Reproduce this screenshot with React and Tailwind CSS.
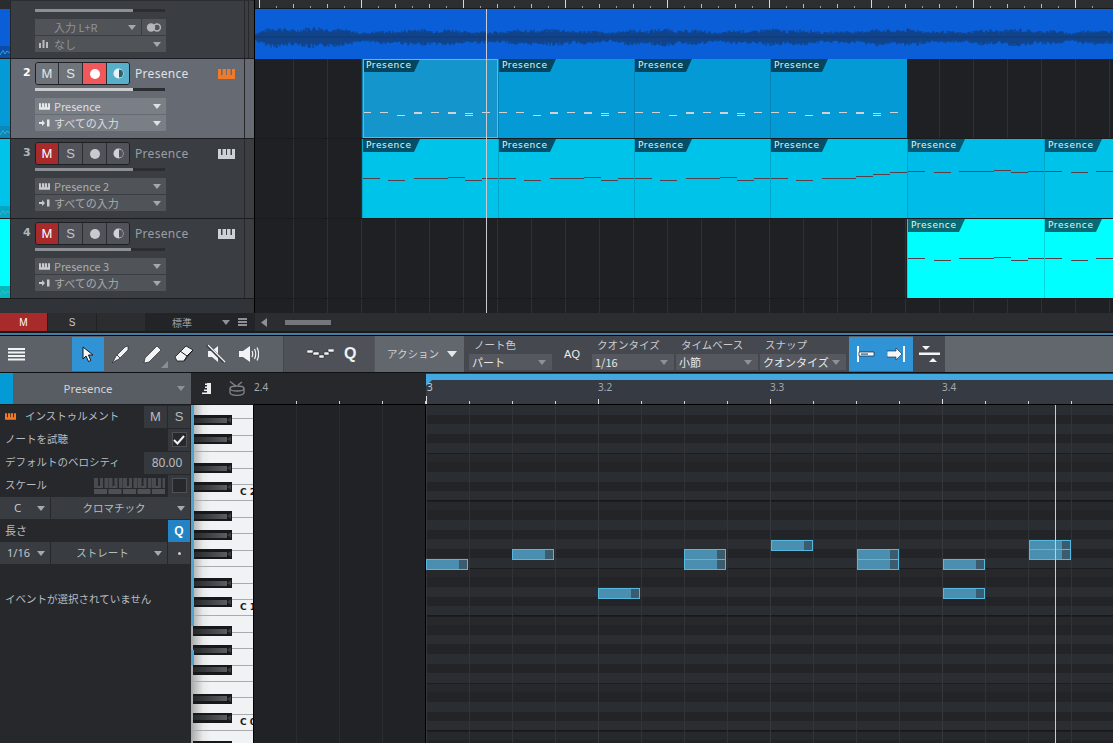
import React from "react";

const JP = "font-['Noto_Sans_CJK_JP','Noto_Sans',sans-serif]";

function PianoIcon({ w = 17, h = 10, color = "#f07a2a" }) {
  return (
    <svg width={w} height={h} viewBox="0 0 17 10" fill={color}>
      <path d="M0 0h3v6h1.5V0h3.5v6h1V0h3.5v6h1.500V0H17v10H0z" />
    </svg>
  );
}

function InputIcon({ color }) {
  return (
    <svg width="11" height="8" viewBox="0 0 11 8" fill={color}>
      <path d="M0 3h3V1l3 3-3 3V5H0zM8 0.500h2.500v7H8z" />
    </svg>
  );
}

function Tri({ color = "#a5a8ac", size = 8 }) {
  return (
    <svg width={size} height={size * 0.625} viewBox="0 0 8 5" fill={color} className="shrink-0">
      <path d="M0 0h8L4 5z" />
    </svg>
  );
}

function MiniWave() {
  return (
    <svg width="10" height="7" viewBox="0 0 10 7" fill="none" stroke="#4fb0cf" strokeWidth="0.8">
      <path d="M0 6 3 1.500 5 5 7 2l3 2" />
    </svg>
  );
}

function DropRow({ icon, text, selected, dim, narrow }) {
  const bg = selected ? "bg-[#7a7f86]" : "bg-[#505357]";
  const fg = selected ? "text-[#dcdee0]" : dim ? "text-[#8f9296]" : "text-[#a9acb0]";
  return (
    <div className={`${narrow ? "w-[106px]" : "w-[131px]"} h-[16px] flex items-center pl-[4px] pr-[5px] ${bg}`}>
      <span className="w-[15px] shrink-0 flex items-center">{icon}</span>
      <span className={`flex-1 text-[11px] leading-none whitespace-nowrap ${fg} ${JP}`}>{text}</span>
      <Tri color={selected ? "#dfe1e3" : "#a5a8ac"} />
    </div>
  );
}

function TrackBtn({ w, className = "", children, last }) {
  return (
    <div className={`h-full flex items-center justify-center ${last ? "" : "border-r border-[#2a2c30]"} ${className}`} style={{ width: w }}>
      {children}
    </div>
  );
}

function HalfCircle({ color, cut }) {
  return (
    <svg width="11" height="11" viewBox="0 0 11 11">
      <circle cx="5.500" cy="5.500" r="5" fill={color} />
      <path d="M6 1.500a4 4 0 0 1 0 8z" fill={cut} />
    </svg>
  );
}

function Track({ num, color, tag, selected, inst, fader = 98 }) {
  const base = selected ? "bg-[#666b73]" : "bg-[#3a3d42]";
  const btn = selected ? "bg-[#6f747b] text-[#e4e6e8]" : "bg-[#50545a] text-[#c4c6c9]";
  const pianoColor = selected ? "#f07a2a" : "#cfd2d5";
  const inColor = selected ? "#e6e8ea" : "#c8cacc";
  return (
    <div className={`h-[80px] flex border-b border-[#1d1e21] ${base}`}>
      <div className="w-[10px] flex flex-col justify-end shrink-0" style={{ background: color }}>
        <div className="h-[12px] flex items-center justify-center" style={{ background: tag }}>
          <MiniWave />
        </div>
      </div>
      <div className="w-px bg-[#24262a]" />
      <div className="w-[233px] shrink-0 pl-[24px] flex flex-col">
        <div className="flex items-center h-[27px] pt-[2px]">
          <div className={`-ml-[12px] w-[12px] text-[11px] font-bold ${selected ? "text-white" : "text-[#b3b6ba]"} font-['DejaVu_Sans',sans-serif]`}>{num}</div>
          <div className="ml-0 w-[95px] h-[23px] flex rounded-[3px] border border-[#1e2023] overflow-hidden text-[13px] font-['Liberation_Sans',sans-serif]">
            <TrackBtn w={23} className={selected ? btn : "bg-[#a82a2a] text-white"}>M</TrackBtn>
            <TrackBtn w={24} className={btn}>S</TrackBtn>
            <TrackBtn w={24} className={selected ? "bg-[#f0585c]" : btn}>
              <div className={`w-[10px] h-[10px] rounded-full ${selected ? "bg-white" : "bg-[#c8cacc]"}`} />
            </TrackBtn>
            <TrackBtn w={22} last className={selected ? "bg-[#58afc9]" : btn}>
              <HalfCircle color={selected ? "#e9f3f6" : "#d0d2d4"} cut={selected ? "#2b5f72" : "#50545a"} />
            </TrackBtn>
          </div>
          <span className={`ml-[5px] w-[83px] text-[12px] font-['Noto_Sans',sans-serif] tracking-[0.3px] ${selected ? "text-[#dfe1e3]" : "text-[#9b9ea2]"}`}>Presence</span>
          <PianoIcon color={pianoColor} />
        </div>
        <div className="h-[3px] w-[130px] mt-[2px] bg-[#2b2d31]">
          <div className={`h-full ${selected ? "bg-[#c9cbce]" : "bg-[#8c8f93]"}`} style={{ width: fader }} />
        </div>
        <div className="mt-[7px] flex flex-col gap-px">
          <DropRow icon={<PianoIcon w={11} h={7} color={inColor} />} text={inst} selected={selected} />
          <DropRow icon={<InputIcon color={inColor} />} text="すべての入力" selected={selected} />
        </div>
      </div>
      <div className="w-px bg-[#26282c]" />
      <div className="flex-1" />
    </div>
  );
}

function Track1() {
  return (
    <div className="h-[59px] flex bg-[#3a3d42] border-b border-[#1d1e21] border-t-[1px] border-t-[#2b2d31]">
      <div className="w-[10px] flex flex-col justify-between bg-[#0a5fd8] shrink-0">
        <div className="h-[8px] bg-[#2a2c30]" />
        <div className="h-[12px] flex items-center justify-center bg-[#0a4ea8]"><MiniWave /></div>
      </div>
      <div className="w-px bg-[#24262a]" />
      <div className="w-[233px] pl-[24px] flex flex-col">
        <div className="h-[3px] w-[130px] mt-[8px] bg-[#2b2d31]"><div className="h-full w-[98px] bg-[#8c8f93]" /></div>
        <div className="mt-[7px] flex flex-col gap-px">
          <div className="flex gap-px">
            <DropRow text="入力 L+R" dim narrow icon={<span className={`text-[11px] leading-none text-[#8f9296] ${JP}`} />} />
            <div className="w-[24px] h-[16px] bg-[#505357] flex items-center justify-center">
              <svg width="16" height="9" viewBox="0 0 16 9"><circle cx="5" cy="4.500" r="4.200" fill="#b4b6b9" /><circle cx="11" cy="4.500" r="3.400" fill="none" stroke="#b4b6b9" strokeWidth="1.500" /></svg>
            </div>
          </div>
          <DropRow text="なし" dim icon={
            <svg width="9" height="8" viewBox="0 0 9 8" fill="#b8babd"><path d="M0 3h2v5H0zM3.500 0h2v8h-2zM7 2h2v6H7z" /></svg>
          } />
        </div>
      </div>
      <div className="w-px bg-[#26282c]" />
      <div className="w-[3px]" />
      <div className="w-px bg-[#26282c]" />
    </div>
  );
}

function Waveform() {
  const pts = [];
  let seed = 7;
  const rnd = () => { seed = (seed * 9301 + 49297) % 233280; return seed / 233280; };
  for (let x = 0; x < 858; x++) {
    const env = 3.2 + 2.4 * Math.abs(Math.sin(x / 37)) + 1.8 * Math.abs(Math.sin(x / 11.3)) + (x < 90 ? 2.4 * Math.abs(Math.sin(x / 14)) : 0);
    const up = env * (0.6 + rnd() * 0.6);
    const dn = env * (0.7 + rnd() * 0.6);
    pts.push(`M${x} ${(28 - up).toFixed(1)}V${(28 + dn).toFixed(1)}`);
  }
  return (
    <svg width="858" height="50" viewBox="0 0 858 50" className="block">
      <path d={pts.join("")} stroke="#123a6e" strokeWidth="1" fill="none" />
      <path d="M0 28H858" stroke="#123a6e" strokeWidth="1" />
    </svg>
  );
}

const P3 = [[0, 17, 39], [25, 42, 41], [51, 85, 39], [85, 102, 38], [102, 119, 41], [119, 136, 39]];
const P3b = [[0, 17, 39], [25, 42, 41], [51, 85, 39], [85, 102, 37], [102, 119, 35], [119, 136, 33]];
const P5 = [[0, 17, 32], [26, 43, 33], [51, 86, 32], [86, 103, 31], [103, 120, 33], [120, 137, 32]];
const P4 = [[0, 17, 39], [26, 43, 41], [51, 86, 39], [86, 103, 38], [103, 120, 41], [120, 137, 39]];
const P2 = [[0, 8, 53, 1], [17, 25, 53, 1], [34, 42, 56, 1], [51, 59, 53, 2], [68, 76, 53, 1], [85, 93, 53, 2], [102, 110, 54, 1], [102, 110, 56, 1], [119, 127, 53, 1]];

function Clip({ width = 136, bg, tagBg, notes, noteColor, selected }) {
  return (
    <div className="relative h-full shrink-0 border-l border-black/15" style={{ width, background: bg }}>
      <svg width={width} height="79" viewBox={`0 0 ${width} 79`} className="absolute inset-0">
        {notes.map(([a, b, y, t = 1], i) => (
          <rect key={i} x={a} y={y} width={b - a} height={t} fill={noteColor} />
        ))}
      </svg>
      <div
        className="absolute left-0 top-0 h-[13px] w-[57px] pl-[3px] text-[9px] leading-[13px] text-[#e6f4f8] tracking-[0.6px] font-['DejaVu_Sans',sans-serif] [clip-path:polygon(0_0,100%_0,calc(100%-6px)_100%,0_100%)]"
        style={{ background: tagBg }}
      >
        Presence
      </div>
      {selected && <div className="absolute inset-0 border border-[#9aa4aa]" />}
    </div>
  );
}

function Lane({ left, children }) {
  return (
    <div className="h-[80px] border-b border-[#1a1b1d] flex overflow-hidden" style={{ paddingLeft: left }}>
      {children}
    </div>
  );
}

function TopRuler() {
  const ticks = [];
  for (let i = 0; i < 50; i++) {
    const x = 4 + i * 17;
    const big = (i % 2) === 0;
    ticks.push(<div key={i} className={`absolute bottom-0 w-px ${(i % 6) === 0 ? "h-[8px] bg-[#d8d8d8]" : big ? "h-[4px] bg-[#bbb]" : "h-[2px] bg-[#999]"}`} style={{ left: x }} />);
  }
  return <div className="h-[9px] relative bg-[#2c2e32] border-b border-[#18191b]">{ticks}</div>;
}

function Arrangement() {
  const c2 = "#049ad6", c3 = "#00c3ea", c4 = "#00ffff";
  return (
    <div className="flex-1 relative flex flex-col overflow-hidden bg-[#1f2023] bg-[repeating-linear-gradient(90deg,transparent_0,transparent_33px,#2e3034_33px,#2e3034_34px)] bg-[position:5px_0]">
      <TopRuler />
      <div className="h-[50px] bg-[#0a5fd8] overflow-hidden"><Waveform /></div>
      <Lane left={107}>
        <Clip bg="#1496cc" tagBg="#04465f" notes={P2} noteColor="#cfd3d6" selected />
        <Clip bg={c2} tagBg="#04465f" notes={P2} noteColor="#cfd3d6" />
        <Clip bg={c2} tagBg="#04465f" notes={P2} noteColor="#cfd3d6" />
        <Clip width={137} bg={c2} tagBg="#04465f" notes={P2} noteColor="#cfd3d6" />
      </Lane>
      <Lane left={107}>
        <Clip bg={c3} tagBg="#04506b" notes={P3} noteColor="#5a4048" />
        <Clip bg={c3} tagBg="#04506b" notes={P3} noteColor="#5a4048" />
        <Clip bg={c3} tagBg="#04506b" notes={P3} noteColor="#5a4048" />
        <Clip width={137} bg={c3} tagBg="#04506b" notes={P3b} noteColor="#5a4048" />
        <Clip width={137} bg="#00bce8" tagBg="#045a74" notes={P5} noteColor="#5a4048" />
        <Clip width={137} bg="#00c3ea" tagBg="#045a74" notes={P5} noteColor="#5a4048" />
      </Lane>
      <Lane left={652}>
        <Clip width={137} bg={c4} tagBg="#086b73" notes={P4} noteColor="#5a4048" />
        <Clip width={137} bg={c4} tagBg="#086b73" notes={P4} noteColor="#5a4048" />
      </Lane>
      <div className="flex-1" />
      <div className="absolute left-[231px] top-[9px] bottom-0 w-px bg-[#c8ccd0]" />
    </div>
  );
}

function BottomBar() {
  return (
    <div className="h-[18px] flex bg-[#2b2d31] text-[10px] text-[#c8cacc]">
      <div className={`w-[48px] flex items-center justify-center bg-[#a82a2a] text-white border-r border-[#222] font-['Liberation_Sans',sans-serif]`}>M</div>
      <div className="w-[49px] flex items-center justify-center border-r border-[#222] font-['Liberation_Sans',sans-serif]">S</div>
      <div className="w-[48px]" />
      <div className="w-[110px] flex items-center bg-[#222428] relative">
        <span className={`ml-[27px] text-[#a0a3a7] text-[10px] ${JP}`}>標準</span>
        <span className="ml-[30px]"><Tri color="#8d9094" /></span>
        <svg width="9" height="8" viewBox="0 0 9 8" fill="#8d9094" className="ml-[8px]"><path d="M0 0h9v2H0zM0 3h9v2H0zM0 6h9v2H0z" /></svg>
      </div>
      <div className="flex-1 flex items-center pl-[6px]">
        <svg width="6" height="9" viewBox="0 0 6 9" fill="#8d9094"><path d="M6 0v9L0 4.500z" /></svg>
        <div className="ml-[18px] w-[46px] h-[5px] bg-[#73767b]" />
      </div>
    </div>
  );
}

function Tool({ active, children, corner }) {
  return (
    <div className={`relative w-[32px] h-[34px] mt-px flex items-center justify-center ${active ? "bg-[#2f93d6]" : ""}`}>
      {children}
      {corner && <div className="absolute right-[0px] bottom-[3px] w-0 h-0 border-l-[7px] border-l-transparent border-b-[7px] border-b-[#8a8e93]" />}
    </div>
  );
}

function ToolDrop({ label, value, w, ml = 0 }) {
  return (
    <div className="flex flex-col items-start" style={{ width: w, marginLeft: ml }}>
      <span className={`h-[17px] pl-[5px] text-[10.500px] leading-[16px] text-[#c9cbcf] whitespace-nowrap ${JP}`}>{label}</span>
      <div className="h-[16px] w-full bg-[#55585e] flex items-center pl-[3px] pr-[6px]">
        <span className={`flex-1 text-[11px] leading-none text-[#e8e9ea] whitespace-nowrap ${JP}`}>{value}</span>
        <Tri color="#8e9196" />
      </div>
    </div>
  );
}

function Toolbar() {
  const s = { stroke: "#12161a", strokeWidth: 1 };
  return (
    <div className="h-[37px] flex bg-[#5c6168] border-b border-[#101113]">
      <div className="w-[72px] flex items-center pl-[8px]">
        <svg width="17" height="13" viewBox="0 0 17 13" fill="#f2f3f4"><path d="M0 0h17v2H0zM0 3.500h17v2H0zM0 7h17v2H0zM0 10.500h17v2H0z" /></svg>
      </div>
      <Tool active>
        <svg width="13" height="17" viewBox="0 0 13 17"><path d="M1 1v12l3-3 2.500 5.500 2.300-1L6.500 9H11z" fill="#f4f6f8" {...s} /></svg>
      </Tool>
      <Tool>
        <svg width="19" height="19" viewBox="0 0 19 19"><path d="M17 1 14 2 5 11 3 15l-2 3 3-2 4-2 9-9z" fill="#f2f3f4" {...s} strokeWidth="0.600" /><path d="M6 10 9 13" stroke="#444" /></svg>
      </Tool>
      <Tool corner>
        <svg width="19" height="19" viewBox="0 0 19 19"><path d="M14 1 18 5 6 17 1 18l1-5z" fill="#f2f3f4" {...s} strokeWidth="0.600" /></svg>
      </Tool>
      <Tool>
        <svg width="20" height="18" viewBox="0 0 20 18"><path d="M12 1 19 5 10 16 3 16 1 12z" fill="#f2f3f4" {...s} strokeWidth="0.800" /><path d="M6 6 13 11 10 16M13 11 19 5" fill="none" {...s} /></svg>
      </Tool>
      <Tool>
        <svg width="20" height="20" viewBox="0 0 20 20"><path d="M2 7h4l6-5v16l-6-5H2z" fill="#f2f3f4" /><path d="M1 1 18 18" stroke="#3a3e43" strokeWidth="3" /><path d="M2 1 19 18" stroke="#f2f3f4" strokeWidth="1.200" /></svg>
      </Tool>
      <Tool>
        <svg width="21" height="18" viewBox="0 0 21 18" fill="none"><path d="M1 6h4l7-5v16l-7-5H1z" fill="#f2f3f4" /><path d="M14 6c1 2 1 4 0 6M16.500 4c1.500 3 1.500 7 0 10M19 2.500c2 4 2 9 0 13" stroke="#f2f3f4" strokeWidth="1.200" /></svg>
      </Tool>
      <div className="w-[20px] border-r border-[#44474c]" />
      <div className="w-[90px] bg-[#4e5258] flex items-center pl-[23px] gap-[10px]">
        <svg width="27" height="10" viewBox="0 0 27 10" fill="#f4f5f6" stroke="#222" strokeWidth="0.500"><path d="M0 1h6v3H0zM6 3h6v3H6zM12 6h5v3h-5zM17 3h5v3h-5zM21 0h6v3h-6z" /></svg>
        <span className="text-[16px] leading-none font-bold text-[#f0f1f2] font-['Liberation_Sans',sans-serif]">Q</span>
      </div>
      <div className="w-[91px] bg-[#62666d] flex items-center pl-[12px] border-l border-[#54575d] border-r border-r-[#44474c]">
        <span className={`text-[10.500px] text-[#cfd1d4] whitespace-nowrap ${JP}`}>アクション</span>
        <span className="ml-[8px]"><Tri color="#e6e7e9" size={10} /></span>
      </div>
      <div className="w-[384px] bg-[#45484e] flex pl-[4px] pt-px">
        <ToolDrop label="ノート色" value="パート" w={83} />
        <div className="w-[40px] flex items-center justify-center text-[11px] text-[#eceded] font-['Liberation_Sans',sans-serif]">AQ</div>
        <ToolDrop label="クオンタイズ" value="1/16" w={82} />
        <ToolDrop label="タイムベース" value="小節" w={82} ml={2} />
        <ToolDrop label="スナップ" value="クオンタイズ" w={86} ml={2} />
      </div>
      <div className="w-[64px] h-[34px] mt-px bg-[#2f93d6] flex items-center">
        <svg width="18" height="16" viewBox="0 0 18 16" className="ml-[8px]"><path d="M1 0v16" stroke="#f4f6f8" strokeWidth="2" /><path d="M2 6h15v4H2z" fill="#f4f6f8" stroke="#12263a" strokeWidth="0.700" /><path d="M4 7.500h7v1.200H4z" fill="#1f5f8f" /></svg>
        <svg width="18" height="16" viewBox="0 0 18 16" className="ml-[12px]"><path d="M0 5h9V2l6 6-6 6v-3H0z" fill="#f4f6f8" stroke="#12263a" strokeWidth="0.600" /><path d="M17 0v16" stroke="#f4f6f8" strokeWidth="2" /></svg>
      </div>
      <div className="w-[32px] bg-[#45484e] flex items-center justify-center">
        <svg width="21" height="18" viewBox="0 0 21 18" fill="#f4f5f6"><path d="M0 7.500h21v2.500H0zM3 1h8L7 5zM10 17h8l-4-4z" /></svg>
      </div>
      <div className="flex-1 bg-[#62676d]" />
    </div>
  );
}

function InsText({ children, className = "" }) {
  return <span className={`text-[10.500px] leading-none text-[#b8bcc0] whitespace-nowrap ${JP} ${className}`}>{children}</span>;
}

function SmallBox({ w = 22, active, children, className = "" }) {
  return (
    <div className={`h-[22px] flex items-center justify-center text-[#b8bcc0] text-[12px] ${active ? "bg-[#2383c4]" : "bg-[#35383c]"} ${className}`} style={{ width: w }}>
      {children}
    </div>
  );
}

function ScaleKeys() {
  return (
    <svg width="71" height="16" viewBox="0 0 71 16" fill="#4d5055">
      {[0, 1, 2, 3, 4].map((k) => (
        <g key={k} transform={`translate(${k * 14.500} 0)`}>
          <path d="M0 0h4v6h-0v4H0zM6 0h3v10H6zM10.500 0h3.500v10h-3.500z" opacity="0.900" />
          <path d="M0 11h13v5H0z" />
          <rect x="4" y="8" width="3" height="2" />
        </g>
      ))}
    </svg>
  );
}

function Inspector() {
  return (
    <div className="w-[191px] shrink-0 flex flex-col bg-[#26282c]">
      <div className="h-[32px] flex bg-[#585c63] border-b border-[#1c1d20]">
        <div className="w-[13px] bg-[#049ad6]" />
        <div className="flex-1 flex items-center justify-center pr-[14px] text-[11.500px] text-[#d0d2d5] font-['Noto_Sans',sans-serif]">Presence</div>
        <div className="w-[14px] flex items-center"><Tri color="#8e9196" /></div>
      </div>
      <div className="flex h-[23px] items-center">
        <span className="pl-[5px] w-[25px]"><PianoIcon w={11} h={7} /></span>
        <InsText className="flex-1">インストゥルメント</InsText>
        <SmallBox w={23} className="mr-px font-['Liberation_Sans',sans-serif] text-[13px]">M</SmallBox>
        <SmallBox className="font-['Liberation_Sans',sans-serif] text-[13px] mr-px">S</SmallBox>
      </div>
      <div className="flex h-[23px] items-center pl-[5px]">
        <InsText className="flex-1">ノートを試聴</InsText>
        <SmallBox className="mr-px">
          <div className="w-[15px] h-[15px] border border-[#4d5055] bg-[#26282c] flex items-center justify-center">
            <svg width="12" height="10" viewBox="0 0 12 10" fill="none" stroke="#f0f1f2" strokeWidth="2"><path d="M1 5l3.500 3.500L11 1" /></svg>
          </div>
        </SmallBox>
      </div>
      <div className="flex h-[23px] items-center pl-[5px]">
        <InsText className="flex-1">デフォルトのベロシティ</InsText>
        <SmallBox w={46} className="mr-px font-['Noto_Sans',sans-serif] text-[11.500px]">80.00</SmallBox>
      </div>
      <div className="flex h-[23px] items-center pl-[5px]">
        <InsText className="flex-1">スケール</InsText>
        <ScaleKeys />
        <SmallBox className="ml-[3px] mr-px">
          <div className="w-[15px] h-[15px] border border-[#4d5055] bg-[#26282c]" />
        </SmallBox>
      </div>
      <div className="flex h-[22px] gap-px">
        <div className="w-[50px] bg-[#393c41] flex items-center pl-[14px] pr-[5px] justify-between">
          <span className="text-[11.500px] text-[#c4c6c9] font-['Noto_Sans',sans-serif]">C</span><Tri />
        </div>
        <div className="w-[139px] bg-[#393c41] flex items-center pr-[5px]">
          <InsText className="flex-1 text-center">クロマチック</InsText><Tri />
        </div>
      </div>
      <div className="flex h-[23px] items-center pl-[5px]">
        <InsText className="flex-1 text-[11px]">長さ</InsText>
        <SmallBox active className="mr-px">
          <span className="text-[12px] font-bold text-white font-['Liberation_Sans',sans-serif]">Q</span>
        </SmallBox>
      </div>
      <div className="flex h-[22px] gap-px">
        <div className="w-[50px] bg-[#393c41] flex items-center pl-[7px] pr-[5px] justify-between">
          <span className="text-[11px] text-[#c4c6c9] font-['Noto_Sans',sans-serif]">1/16</span><Tri />
        </div>
        <div className="w-[116px] bg-[#393c41] flex items-center pr-[5px]">
          <InsText className="flex-1 text-center">ストレート</InsText><Tri />
        </div>
        <div className="w-[22px] bg-[#393c41] flex items-center justify-center">
          <div className="w-[3px] h-[3px] rounded-full bg-[#c8cacc]" />
        </div>
      </div>
      <div className="pl-[5px] pt-[21px]"><InsText>イベントが選択されていません</InsText></div>
    </div>
  );
}

const BLACK = [415, 434, 463, 482, 511, 530, 549, 578, 597, 626, 645, 664.5, 693.5, 712.5, 741];
const WHITE_H = 115 / 7;

function Keyboard() {
  const keys = [];
  keys.push(14.3);
  for (let i = 0; i < 21; i++) keys.push(WHITE_H);
  return (
    <div className="w-[63px] shrink-0 relative overflow-hidden border-r border-black bg-[#f1f2f4]">
      {keys.map((h, i) => (
        <div key={i} className="border-b border-[#a9abae] bg-[linear-gradient(90deg,#a8a8a8,#e8e9eb_12px,#f1f2f4_20px)]" style={{ height: h }} />
      ))}
      {BLACK.map((y) => (
        <div key={y} className="absolute left-[2px] w-[39px] h-[10px] bg-[#17181a] flex items-center" style={{ top: y - 405 }}>
          <div className="w-[34px] h-[5px] bg-[linear-gradient(90deg,#25282a,#5a5e60)]" />
          <div className="w-0 h-0 border-y-[3px] border-y-transparent border-r-[4px] border-r-[#3c3f41]" />
        </div>
      ))}
      <div className="absolute left-0 top-0 w-[3px] h-[221px] bg-[#4ea6d0]" />
      <div className="absolute left-0 top-[245px] w-[3px] h-[15px] bg-[#4ea6d0]" />
      {[["C 2", 82], ["C 1", 197], ["C 0", 312]].map(([t, y]) => (
        <span key={t} className="absolute left-[49px] text-[9px] leading-[11px] text-[#16181c] font-['DejaVu_Sans',sans-serif] font-bold whitespace-nowrap" style={{ top: y }}>{t}</span>
      ))}
    </div>
  );
}

const ROW_KINDS = ["l", "d", "l", "d", "l", "m", "d", "l", "d", "l", "m"];
// A G# G F# F E D# D C# C B A# repeating (from the top row downward)
const OCT = ["l", "d", "l", "d", "l", "e", "d", "l", "d", "c", "e", "d"];

function Note({ x, y }) {
  return (
    <div className="absolute h-[11px] w-[42px] flex border border-[#55b8de] bg-[#3a5c6e]" style={{ left: x - 426, top: y - 405 }}>
      <div className="w-[32px] bg-[#4a8fb0]" />
    </div>
  );
}

const NOTES = [[426, 559], [512, 549], [598, 588], [684, 549], [684, 559], [771, 540], [857, 549], [857, 559], [943, 559], [943, 588], [1029, 540], [1029, 549]];

function RollGrid() {
  const rows = [];
  for (let i = 0; i < 36; i++) {
    const k = OCT[i % 12];
    const cls = k === "l" ? "bg-[#2a2d32]" : k === "c" ? "bg-[#2a2d32] border-b border-[#17181a]" : k === "e" ? "bg-[#26282c] border-t border-[#1c1d20]" : "bg-[#232427]";
    rows.push(<div key={i} className={`h-[9.583px] ${cls}`} />);
  }
  return (
    <div className="flex-1 relative overflow-hidden border-l border-black">
      {rows}
      <div className="absolute inset-0 bg-[repeating-linear-gradient(90deg,#3c3f44_0,#3c3f44_1px,transparent_1px,transparent_172px)]" />
      <div className="absolute inset-0 bg-[repeating-linear-gradient(90deg,#34363b_0,#34363b_1px,transparent_1px,transparent_43px)] opacity-80" />
      {NOTES.map(([x, y]) => <Note key={`${x}-${y}`} x={x} y={y} />)}
      <div className="absolute left-[629px] top-0 bottom-0 w-px bg-[#c8ccd0]" />
    </div>
  );
}

function RollRuler() {
  const labels = [["3.2", 172], ["3.3", 344], ["3.4", 516]];
  return (
    <div className="flex-1 flex border-b border-black">
      <div className="w-[172px] relative bg-[#26282c] bg-[repeating-linear-gradient(90deg,transparent_0,transparent_42px,#d0d2d4_42px,#d0d2d4_43px)] bg-[length:100%_3px] bg-bottom bg-no-repeat">
        <span className="absolute left-0 top-[7px] text-[10px] text-[#a6a9ad] font-['Noto_Sans',sans-serif]">2.4</span>
      </div>
      <div className="flex-1 relative bg-[#363a42] bg-[repeating-linear-gradient(90deg,#d0d2d4_0,#d0d2d4_1px,transparent_1px,transparent_43px)] bg-[length:100%_3px] bg-bottom bg-no-repeat">
        <div className="h-[6px] mt-px bg-[#44a8e0]" />
        <div className="absolute left-0 top-[7px] w-0 h-0 border-t-[6px] border-t-[#44a8e0] border-r-[6px] border-r-transparent" />
        <span className="absolute left-[1px] top-[7px] text-[10px] text-[#c8d0d8] font-['Noto_Sans',sans-serif]">3</span>
        {labels.map(([t, x]) => (
          <React.Fragment key={t}>
            <span className="absolute top-[7px] text-[10px] text-[#a6a9ad] font-['Noto_Sans',sans-serif]" style={{ left: x }}>{t}</span>
            <div className="absolute bottom-0 w-px h-[5px] bg-[#e0e2e4]" style={{ left: x }} />
          </React.Fragment>
        ))}
        <div className="absolute bottom-0 left-0 w-px h-[8px] bg-[#e0e2e4]" />
      </div>
    </div>
  );
}

function Editor() {
  return (
    <div className="flex-1 flex min-h-0">
      <Inspector />
      <div className="flex-1 flex flex-col min-w-0">
        <div className="h-[32px] flex">
          <div className="w-[63px] bg-[#26282c] border-b border-[#17181a] flex items-center pl-[11px] gap-[18px]">
            <svg width="9" height="11" viewBox="0 0 9 11" fill="#eceded"><path d="M5 0h4v11H0V9.500h5V8H2V6.500h3V5H3V3.500h2V2H3V0.500h2z" /></svg>
            <svg width="16" height="15" viewBox="0 0 16 15" fill="none" stroke="#80848a" strokeWidth="1.300"><ellipse cx="8" cy="7.500" rx="7" ry="2.500" /><path d="M1 7.500v4c0 1.500 3 2.800 7 2.800s7-1.300 7-2.800v-4" /><path d="M1 0.500 7 5M13 1 9 4" /></svg>
          </div>
          <RollRuler />
        </div>
        <div className="flex-1 flex min-h-0">
          <Keyboard />
          <div className="w-[171px] shrink-0 bg-[#212225] bg-[repeating-linear-gradient(90deg,transparent_0,transparent_42px,#2b2c30_42px,#2b2c30_43px)]" />
          <RollGrid />
        </div>
      </div>
    </div>
  );
}

export default function App() {
  return (
    <div className="w-[1113px] h-[743px] overflow-hidden flex flex-col bg-[#1a1b1d]">
      <div className="h-[313px] flex">
        <div className="w-[254px] shrink-0 flex flex-col bg-[#303337]">
          <Track1 />
          <Track num="2" color="#049ad6" tag="#0a88b8" selected inst="Presence" />
          <Track num="3" color="#00c3ea" tag="#05a5c4" inst="Presence 2" />
          <Track num="4" color="#00ffff" tag="#06b8bc" inst="Presence 3" fader={96} />
        </div>
        <div className="w-px bg-black" />
        <Arrangement />
      </div>
      <BottomBar />
      <div className="h-[2px] bg-[#1a1b1d]" />
      <div className="h-[2px] bg-[#3d7ea6]" />
      <div className="h-px bg-black" />
      <Toolbar />
      <Editor />
    </div>
  );
}
